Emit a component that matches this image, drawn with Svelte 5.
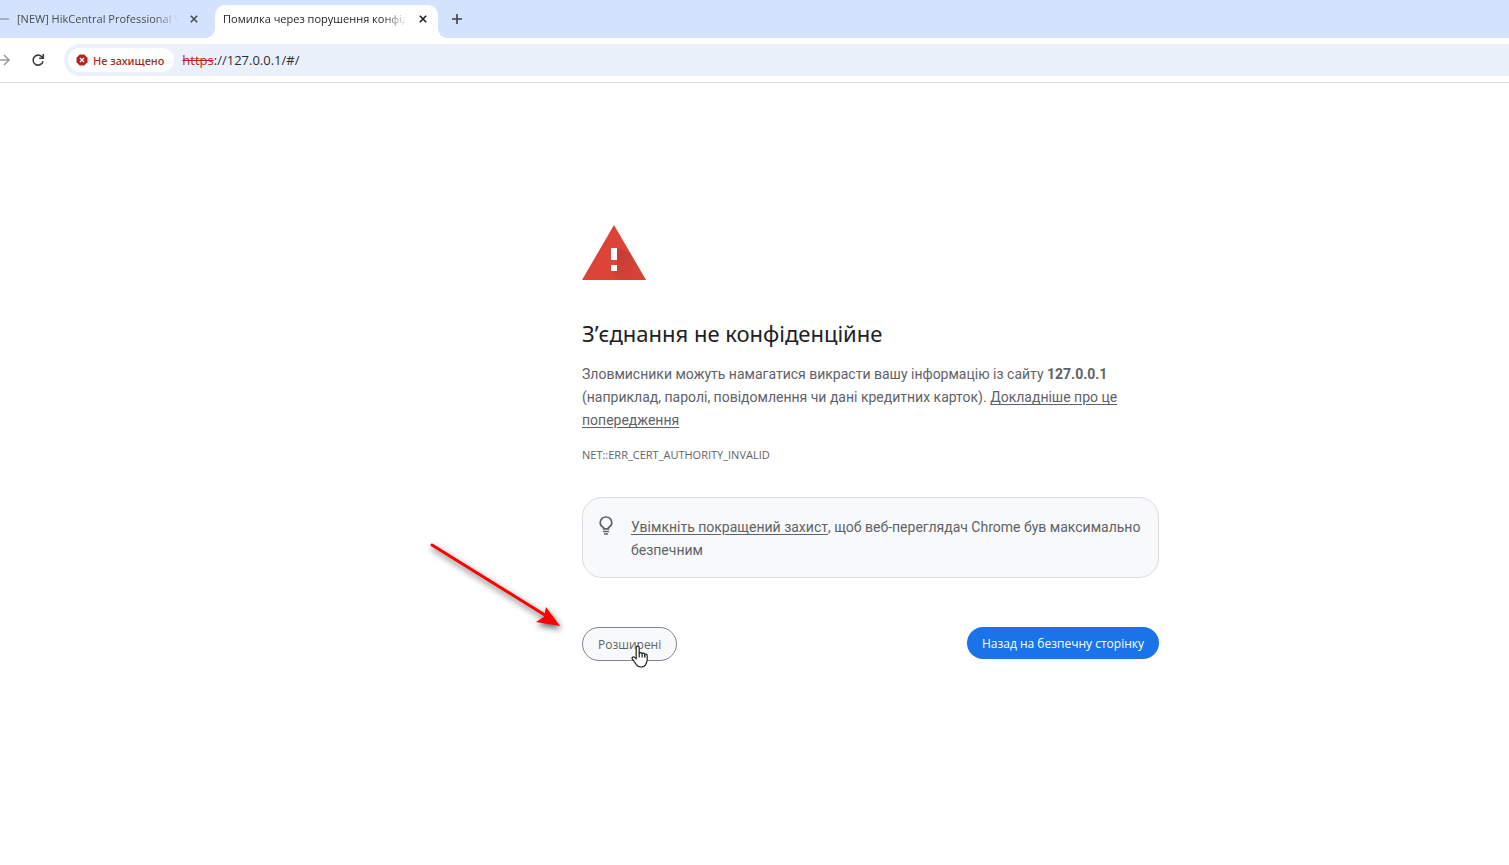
<script lang="ts">
	const errorCode = 'NET::ERR_CERT_AUTHORITY_INVALID';
	const host = '127.0.0.1';

	let activeTab = $state('privacy');
	let address = $state('://127.0.0.1/#/');

	const tabs = [
		{ id: 'hik', title: '[NEW] HikCentral Professional V2.6', favicon: true },
		{ id: 'privacy', title: 'Помилка через порушення конфіденційності', favicon: false }
	];
</script>

<div class="browser">
	<header>
		<div class="tab-strip">
			{#each tabs as tab (tab.id)}
				<div class="tab" class:active={tab.id === activeTab}>
					{#if tab.favicon}
						<span class="favicon"></span>
					{/if}
					<button class="tab-title" onclick={() => (activeTab = tab.id)}>{tab.title}</button>
					<button class="icon-button close" aria-label="Закрити вкладку">
						<svg width="8" height="8" viewBox="0 0 8 8">
							<path d="M0.8 0.8 7.2 7.2M7.2 0.8 0.8 7.2" />
						</svg>
					</button>
				</div>
			{/each}
			<button class="icon-button add" aria-label="Нова вкладка">
				<svg width="10" height="10" viewBox="0 0 10 10"><path d="M5 0V10M0 5H10" /></svg>
			</button>
		</div>

		<div class="toolbar">
			<button class="icon-button forward" aria-label="Вперед">
				<svg width="10" height="12" viewBox="0 0 10 12">
					<path d="M0 6H9M4 1 9 6 4 11" />
				</svg>
			</button>
			<button class="icon-button reload" aria-label="Оновити">
				<svg width="14" height="14" viewBox="0 0 14 14">
					<path d="M12 8.2A5 5 0 1 1 10.8 3.7L12.3 5.1M12.3 1V5.2H8.2" />
				</svg>
			</button>
			<div class="omnibox">
				<button class="security">
					<svg width="12" height="12" viewBox="0 0 12 12">
						<path
							class="badge"
							d="M3.7 0.5h4.6l3.2 3.2v4.6l-3.2 3.2H3.7L0.5 8.3V3.7z"
						/>
						<path class="cross" d="M4 4 8 8M8 4 4 8" />
					</svg>
					Не захищено
				</button>
				<label class="address">
					<s>https</s>
					<input bind:value={address} aria-label="Адреса" spellcheck="false" />
				</label>
			</div>
		</div>
	</header>

	<main>
		<svg class="warning" width="64" height="55" viewBox="0 0 64 55">
			<defs>
				<linearGradient id="shade" x1="0" y1="0" x2="1" y2="1">
					<stop offset="0.1" stop-color="#b23a30" stop-opacity="0.7" />
					<stop offset="0.8" stop-color="#c53f35" stop-opacity="0.25" />
				</linearGradient>
			</defs>
			<path d="M32 0 64 55H0z" fill="#db4437" />
			<path d="M35 23 48 28 64 55H38L29 46H35z" fill="url(#shade)" />
			<path d="M29 23h6v12h-6zM29 40h6v6h-6z" fill="#fff" />
		</svg>

		<h1>З’єднання не конфіденційне</h1>
		<p>
			Зловмисники можуть намагатися викрасти вашу інформацію із сайту <strong>{host}</strong>
			(наприклад, паролі, повідомлення чи дані кредитних карток).
			<a href="#details">Докладніше про це попередження</a>
		</p>
		<p class="error-code">{errorCode}</p>

		<section class="tip">
			<svg width="14" height="20" viewBox="0 0 14 20">
				<path
					d="M4.5 12.8v-1.3C2.5 10.5 1.2 8.8 1.2 6.8a5.8 5.8 0 0 1 11.6 0c0 2-1.3 3.7-3.3 4.7v1.3z"
				/>
				<path d="M4 15.5h6M5 18h4" />
			</svg>
			<p>
				<a href="#protection">Увімкніть покращений захист</a>, щоб веб-переглядач Chrome був
				максимально безпечним
			</p>
		</section>

		<div class="actions">
			<div class="advanced-wrap">
				<button class="advanced">Розширені</button>
				<svg class="arrow" width="150" height="104" viewBox="0 0 150 104">
					<path class="shaft" d="M12 11 128 83" />
					<path class="head" d="M140 92 116 88 124 83 126 73z" />
				</svg>
				<svg class="pointer" width="18" height="23" viewBox="0 0 18 23">
					<path
						d="M5.2 13.7V2.8c0-2.2 3-2.2 3 0v6c.3-1.8 2.8-1.6 2.9.2.5-1.4 2.6-1 2.7.7.6-1.2 2.4-.7 2.4 1v4.1c0 2.4-1 3.1-1.5 4.6-.8 1.7-2.3 2.6-5 2.6-2.5 0-3.7-1-4.6-2.7-.8-1.8-2.2-3.4-3.7-5.2-1.2-1.6.8-3 2.2-1.7z"
					/>
					<path d="M8.2 8.5v4M11.1 9v3.5M13.8 9.7v3" />
				</svg>
			</div>
			<button class="primary">Назад на безпечну сторінку</button>
		</div>
	</main>
</div>

<style>
	:global(body) {
		margin: 0;
		background: #fff;
		font-family: 'Open Sans', 'Noto Sans', sans-serif;
	}

	button,
	input {
		padding: 0;
		border: 0;
		background: none;
		font: inherit;
		color: inherit;
	}

	button {
		cursor: pointer;
	}

	svg {
		display: block;
		flex-shrink: 0;
	}

	h1,
	.security {
		font-family: 'Noto Sans', 'Open Sans', sans-serif;
	}

	.browser {
		overflow: hidden;
		min-height: 100vh;
	}

	.tab-strip {
		display: flex;
		box-sizing: border-box;
		height: 38px;
		padding-top: 5px;
		background: #d3e3fd;
		font-size: 11px;
	}

	.tab {
		position: relative;
		display: flex;
		align-items: center;
		box-sizing: border-box;
		width: 223px;
		padding: 0 7px 6px 8px;
		border-radius: 10px 10px 0 0;
		color: #474b52;
	}

	.tab:first-child {
		width: 215px;
		padding-left: 0;
	}

	.tab.active {
		background: #fff;
		color: #1f1f1f;
	}

	/* outward curves at the foot of the selected tab */
	.tab.active::before,
	.tab.active::after {
		position: absolute;
		bottom: 0;
		width: 10px;
		height: 10px;
		content: '';
	}

	.tab.active::before {
		right: 100%;
		background: radial-gradient(circle at 0 0, transparent 10px, #fff 10px);
	}

	.tab.active::after {
		left: 100%;
		background: radial-gradient(circle at 100% 0, transparent 10px, #fff 10px);
	}

	.favicon {
		flex-shrink: 0;
		width: 9px;
		height: 2px;
		margin-right: 8px;
		background: #a5afbd;
	}

	.tab-title {
		flex: 1;
		overflow: hidden;
		text-align: left;
		white-space: nowrap;
		mask-image: linear-gradient(to right, #000 calc(100% - 24px), transparent);
	}

	.icon-button {
		display: grid;
		place-items: center;
	}

	.icon-button path {
		fill: none;
		stroke: currentColor;
		stroke-width: 1.6;
	}

	.close {
		width: 16px;
		height: 16px;
		margin-left: 8px;
	}

	.tab:first-child .close {
		margin-right: 6px;
	}

	.add {
		width: 38px;
		height: 28px;
		color: #3c4043;
	}

	.toolbar {
		display: flex;
		align-items: center;
		height: 44px;
		border-bottom: 1px solid #dadce0;
	}

	.forward {
		width: 10px;
		height: 28px;
		color: #9b9ea3;
	}

	.reload {
		width: 28px;
		height: 28px;
		margin: 0 12px 0 14px;
		color: #3c4043;
	}

	.omnibox {
		display: flex;
		flex: 1;
		align-items: center;
		height: 32px;
		padding-left: 4px;
		border-radius: 16px 0 0 16px;
		background: #ebf1fa;
	}

	.security {
		display: flex;
		align-items: center;
		gap: 5px;
		height: 24px;
		padding: 0 10px 0 8px;
		border-radius: 12px;
		background: #fff;
		color: #a32a22;
		font-size: 11px;
		font-weight: 500;
	}

	.badge {
		fill: #b3261e;
	}

	.cross {
		stroke: #fff;
		stroke-width: 1.3;
	}

	.address {
		display: flex;
		flex: 1;
		align-items: center;
		margin-left: 8px;
		color: #2b2e33;
		font-size: 13px;
	}

	.address s {
		color: #b3261e;
	}

	.address input {
		flex: 1;
		outline: 0;
	}

	main {
		max-width: 577px;
		margin: 142px 350px 0 auto;
		color: #5f6368;
		font-size: 14px;
		line-height: 23px;
	}

	h1 {
		margin: 37px 0 13px;
		color: #202124;
		font-size: 22px;
		font-weight: 400;
		line-height: 33px;
	}

	p {
		margin: 0;
		font-family: Roboto, 'Open Sans', sans-serif;
	}

	a {
		color: inherit;
		text-underline-offset: 2px;
	}

	.error-code {
		margin-top: 11px;
		font-family: 'Open Sans', 'Noto Sans', sans-serif;
		font-size: 11px;
	}

	.tip {
		display: flex;
		gap: 18px;
		margin-top: 31px;
		padding: 18px 8px 15px 16px;
		border: 1px solid #dadce0;
		border-radius: 20px;
		background: #f8f9fb;
	}

	.tip path {
		fill: none;
		stroke: #5f6368;
		stroke-width: 1.7;
	}

	.actions {
		display: flex;
		align-items: flex-start;
		justify-content: space-between;
		margin-top: 49px;
		font-size: 12px;
	}

	.advanced-wrap {
		position: relative;
	}

	.advanced {
		height: 34px;
		padding: 0 15px;
		border: 1px solid #80868b;
		border-radius: 17px;
		background: #f8f9fb;
	}

	.primary {
		height: 32px;
		padding: 0 15px;
		border-radius: 16px;
		background: #1a73e8;
		color: #fff;
		font-weight: 500;
	}

	.arrow,
	.pointer {
		position: absolute;
		pointer-events: none;
	}

	.arrow {
		top: -93px;
		right: calc(100% + 12px);
		filter: drop-shadow(1px 3px 3px rgb(0 0 0 / 65%));
	}

	.shaft {
		stroke: #f00;
		stroke-linecap: round;
		stroke-width: 3;
	}

	.head {
		fill: #f00;
	}

	.pointer {
		top: 18px;
		left: 49px;
	}

	.pointer path {
		fill: #fff;
		stroke: #222;
		stroke-width: 1.2;
	}
</style>
